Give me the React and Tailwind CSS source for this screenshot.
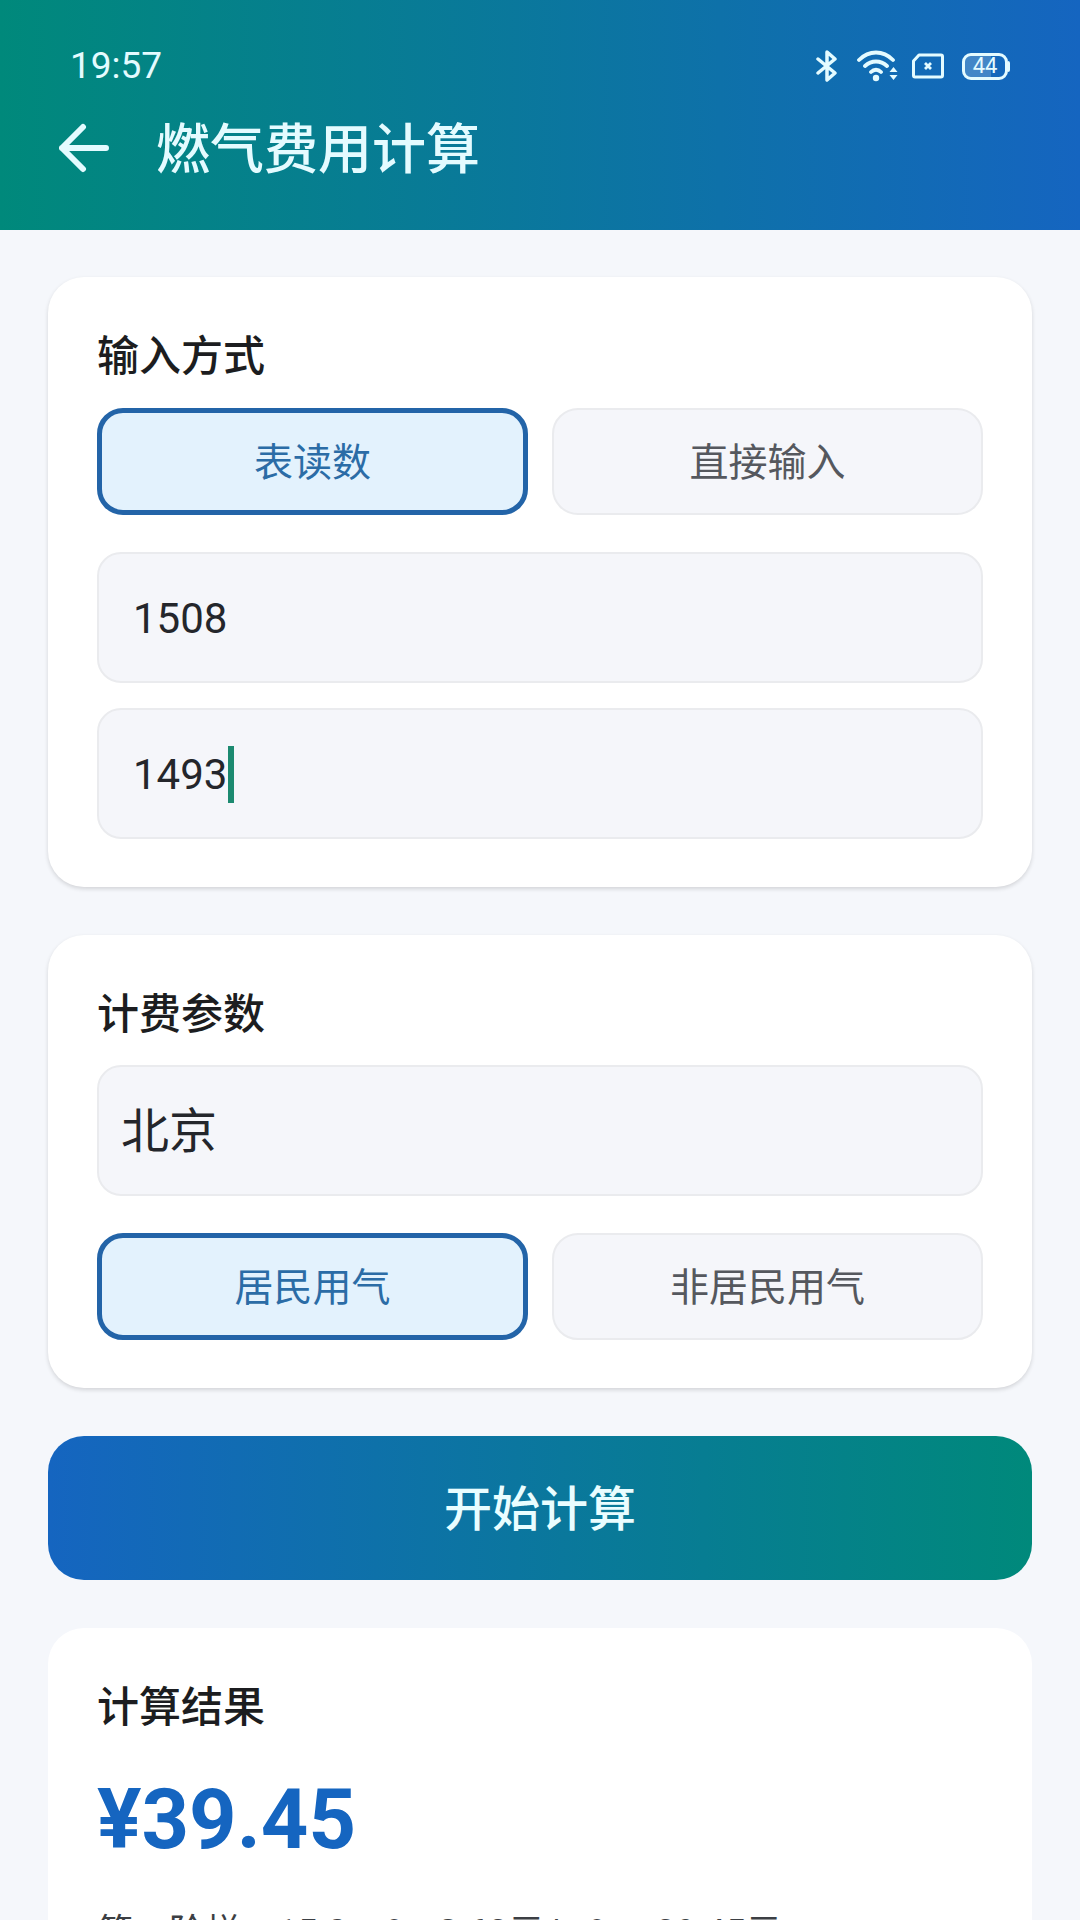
const FONT = "font-['Roboto','Noto_Sans_CJK_SC',sans-serif]";

function StatusIcons() {
  return (
    <div className="flex items-center text-[#e4fbff]">
      <svg width="24" height="32" viewBox="0 0 24 32" fill="none" stroke="currentColor" strokeWidth="3.500" strokeLinejoin="round" strokeLinecap="round">
        <path d="M3 9l17 14-8 7V2l8 7L3 23" />
      </svg>
      <svg className="ml-[18px]" width="41" height="32" viewBox="0 0 41 32" fill="none">
        <path d="M2 10c10-10 24-10 34 0M8 16c6.500-6 15.500-6 22 0M14 22c3-3 7-3 10 0" stroke="currentColor" strokeWidth="3.800" strokeLinecap="round" />
        <circle cx="19" cy="28" r="3.200" fill="currentColor" />
        <path d="M32.500 22l4-5 4 5zM32.500 25l4 5 4-5z" fill="currentColor" />
      </svg>
      <svg className="ml-[14px]" width="32" height="26" viewBox="0 0 32 26" fill="none">
        <path d="M7 2h22a1.500 1.500 0 0 1 1.500 1.500v19A1.500 1.500 0 0 1 29 24H3a1.500 1.500 0 0 1-1.500-1.500V8z" stroke="currentColor" strokeWidth="3" strokeLinejoin="round" />
        <path d="M13 10l6 6M19 10l-6 6" stroke="currentColor" strokeWidth="2.800" />
      </svg>
      <div className="ml-[18px] flex items-center">
        <div className="relative flex h-[27px] w-[46px] items-center justify-center overflow-hidden rounded-[9px] border-[3px] border-[#e4fbff] text-[22px] leading-none">
          <div className="absolute inset-y-0 left-0 w-[64%] bg-white/20" />
          <span className="relative">44</span>
        </div>
        <div className="h-[11px] w-[2px] rounded-r-sm bg-[#e4fbff]" />
      </div>
    </div>
  );
}

function Toggle({ label, active }) {
  return (
    <div
      className={
        active
          ? "flex h-[107px] items-center justify-center rounded-[26px] border-[5px] border-[#2364a8] bg-[#e3f2fd] pt-[4px] text-[39px] text-[#2b6ca6]"
          : "flex h-[107px] items-center justify-center rounded-[26px] border-2 border-[#eaebee] bg-[#f5f6fa] pt-[4px] text-[39px] text-[#55585e]"
      }
    >
      {label}
    </div>
  );
}

function Field({ value, cursor, large }) {
  return (
    <div
      className={
        large
          ? "flex h-[131px] items-center rounded-[24px] border-2 border-[#eaebee] bg-[#f5f6fa] pt-[2px] pl-[22px] text-[48px] text-[#24262b]"
          : "flex h-[131px] items-center rounded-[24px] border-2 border-[#eaebee] bg-[#f5f6fa] pt-[2px] pl-[34px] text-[42px] text-[#24262b]"
      }
    >
      {value}
      {cursor && <span className="ml-px h-[57px] w-[6px] bg-[#1c8a70]" />}
    </div>
  );
}

function Card({ title, children }) {
  return (
    <section className="rounded-[36px] bg-white px-[49px] pt-[56px] pb-[48px] shadow-[0_2px_4px_rgba(0,0,0,0.14)]">
      <h2 className="text-[42px] leading-[48px] font-medium text-[#1c1d20]">{title}</h2>
      {children}
    </section>
  );
}

export default function App() {
  return (
    <div className={`${FONT} h-[1920px] w-[1080px] overflow-hidden bg-[#f5f7fb]`}>
      <header className="h-[230px] bg-[linear-gradient(90deg,#00897b,#1565c0)] text-[#e4fbff]">
        <div className="flex items-center justify-between pt-[46px] pr-[70px] pl-[70px]">
          <span className="text-[37px] leading-[40px]">19:57</span>
          <StatusIcons />
        </div>
        <div className="mt-[27px] flex items-center pl-[59px]">
          <svg width="50" height="50" viewBox="0 0 50 50" fill="none" stroke="currentColor" strokeWidth="6" strokeLinecap="round" strokeLinejoin="round">
            <path d="M3 25h44M24 4L3 25l21 21" />
          </svg>
          <h1 className="mt-[6px] ml-[47px] text-[54px] leading-[64px] font-medium">燃气费用计算</h1>
        </div>
      </header>

      <main className="flex flex-col px-[48px] pt-[47px]">
        <Card title="输入方式">
          <div className="mt-[27px] grid grid-cols-2 gap-[24px]">
            <Toggle label="表读数" active />
            <Toggle label="直接输入" />
          </div>
          <div className="mt-[37px] flex flex-col gap-[25px]">
            <Field value="1508" />
            <Field value="1493" cursor />
          </div>
        </Card>

        <div className="mt-[48px]">
          <Card title="计费参数">
            <div className="mt-[26px]">
              <Field value="北京" large />
            </div>
            <div className="mt-[37px] grid grid-cols-2 gap-[24px]">
              <Toggle label="居民用气" active />
              <Toggle label="非居民用气" />
            </div>
          </Card>
        </div>

        <button className="mt-[48px] h-[144px] rounded-[36px] bg-[linear-gradient(90deg,#1565c0,#00897b)] pt-[4px] text-[48px] font-medium text-[#e9fdff]">
          开始计算
        </button>

        <section className="mt-[48px] rounded-t-[36px] bg-white px-[49px] pt-[56px]">
          <h2 className="text-[42px] leading-[48px] font-medium text-[#1c1d20]">计算结果</h2>
          <p className="mt-[38px] text-[83px] leading-[100px] font-bold text-[#1565c0]">¥39.45</p>
          <p className="mt-[41px] text-[36px] leading-[44px] whitespace-nowrap text-[#3c3f44]">
            第一阶梯：15.0 m³ × 2.63元/m³ = <span className="ml-[14px]">39.45元</span>
          </p>
        </section>
      </main>
    </div>
  );
}
